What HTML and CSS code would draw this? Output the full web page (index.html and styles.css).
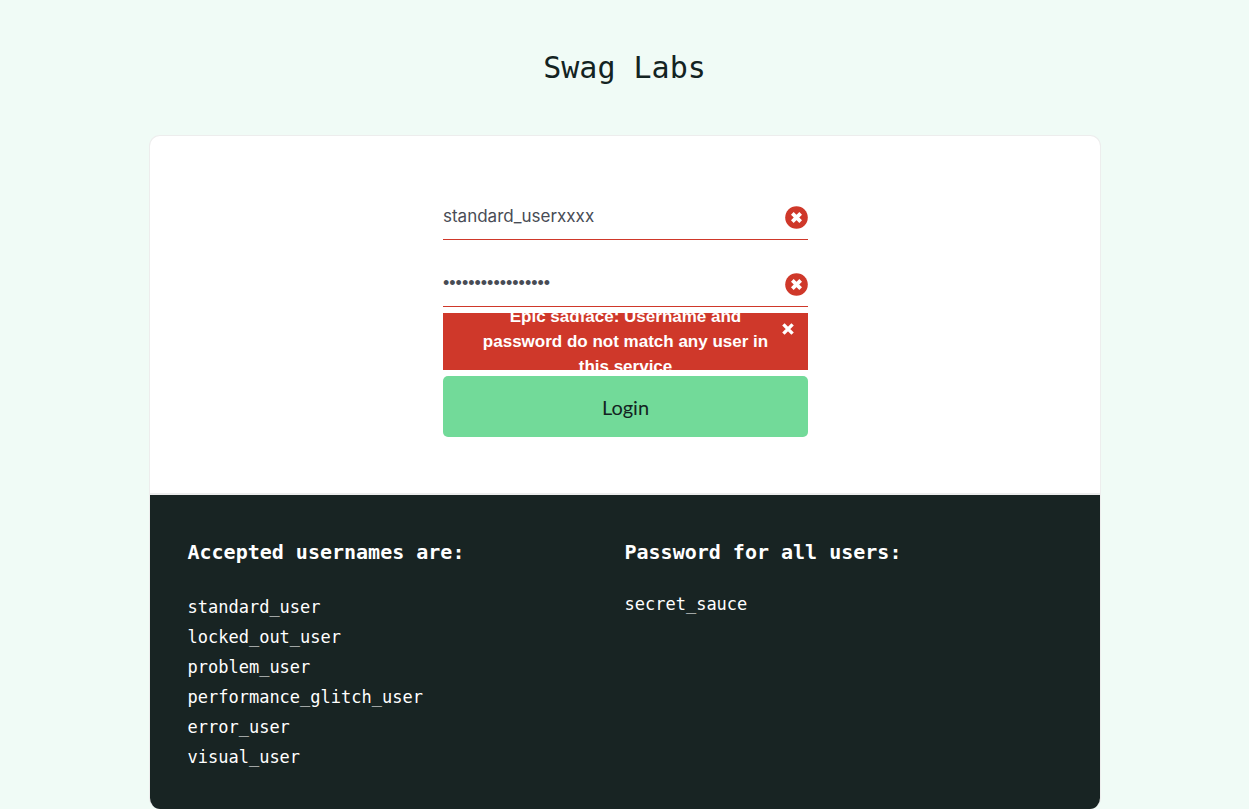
FILE: index.html
```html
<!DOCTYPE html>
<html lang="en">
<head>
<meta charset="utf-8">
<meta name="viewport" content="width=device-width, initial-scale=1">
<title>Swag Labs</title>
<link rel="stylesheet" href="styles.css">
</head>
<body>
<h1 class="logo">Swag Labs</h1>
<main class="card">
  <section class="login">
    <form class="form">
      <div class="field">
        <input class="input" type="text" aria-label="Username" value="standard_userxxxx">
        <svg class="field-icon" viewBox="0 0 22 22" aria-hidden="true"><circle cx="11" cy="11" r="10.8"/><path class="cross" d="M7 7l8 8M15 7l-8 8"/></svg>
      </div>
      <div class="field">
        <input class="input input-password" type="password" aria-label="Password" value="secret_saucexxxxx">
        <svg class="field-icon" viewBox="0 0 22 22" aria-hidden="true"><circle cx="11" cy="11" r="10.8"/><path class="cross" d="M7 7l8 8M15 7l-8 8"/></svg>
      </div>
      <div class="error" role="alert">
        <h3 class="error-text">Epic sadface: Username and password do not match any user in this service</h3>
        <button class="error-close" type="button" aria-label="Dismiss error"><svg viewBox="0 0 16 16" aria-hidden="true"><path d="M3.4 3.4l9.2 9.2M12.6 3.4l-9.2 9.2"/></svg></button>
      </div>
      <button class="submit" type="submit">Login</button>
    </form>
  </section>
  <section class="credentials">
    <div>
      <h4 class="heading">Accepted usernames are:</h4>
      <ul class="users">
        <li>standard_user</li>
        <li>locked_out_user</li>
        <li>problem_user</li>
        <li>performance_glitch_user</li>
        <li>error_user</li>
        <li>visual_user</li>
      </ul>
    </div>
    <div>
      <h4 class="heading">Password for all users:</h4>
      <p class="password">secret_sauce</p>
    </div>
  </section>
</main>
</body>
</html>
```
FILE: styles.css
```css
* { box-sizing: border-box; }
body {
  margin: 0;
  background: #f0fbf6;
  color: #132322;
  font-family: "DejaVu Sans Mono", "Liberation Mono", monospace;
}
h1, h3, h4, p, ul { margin: 0; padding: 0; }
.logo {
  padding: 48px 0 47px;
  font-size: 30px;
  font-weight: 400;
  line-height: 40px;
  text-align: center;
}
.card {
  max-width: 952px;
  margin: 0 auto;
  overflow: hidden;
  background: #fff;
  border: 1px solid #ededed;
  border-bottom: 0;
  border-radius: 11px;
}
.login {
  padding: 60px 20px 56px 22px;
  border-bottom: 2px solid #ededed;
}
.form {
  display: flex;
  flex-direction: column;
  max-width: 365px;
  margin: 0 auto;
}
.field {
  display: flex;
  align-items: center;
  height: 44px;
  margin-bottom: 23px;
  border-bottom: 1px solid #cf382a;
}
.field + .field { margin-bottom: 6px; }
.input {
  flex: 1;
  min-width: 0;
  padding: 0 0 4px;
  border: 0;
  outline: 0;
  background: none;
  color: #484c55;
  font-family: Inter, "Liberation Sans", sans-serif;
  font-size: 17px;
  line-height: 24px;
}
.input-password { font-family: "Liberation Sans", sans-serif; font-size: 18px; }
.field-icon { width: 23px; height: 23px; fill: #cf382a; }
.cross { fill: none; stroke: #fff; stroke-width: 3.6; }
.error {
  position: relative;
  display: flex;
  align-items: center;
  height: 57px;
  margin-bottom: 6px;
  padding: 0 32px;
  overflow: hidden;
  background: #cf382a;
  color: #fff;
}
.error-text {
  flex: 1;
  font: bold 17px/25px "Liberation Sans", sans-serif;
  text-align: center;
}
.error-close {
  position: absolute;
  top: 8px;
  right: 12px;
  width: 16px;
  height: 16px;
  padding: 0;
  border: 0;
  background: none;
}
.error-close svg { display: block; stroke: #fff; stroke-width: 3.4; }
.submit {
  height: 61px;
  padding: 0;
  border: 0;
  border-radius: 5px;
  background: #72da99;
  color: #132322;
  font: 20px/28px Lato, "Noto Sans", sans-serif;
}
.credentials {
  display: grid;
  grid-template-columns: 1fr 1fr;
  padding: 42px 38px 37px;
  background: #182423;
  color: #fff;
}
.heading { font-size: 20px; line-height: 30px; }
.users {
  padding-top: 25px;
  list-style: none;
  font-size: 17px;
  line-height: 30px;
}
.password { padding-top: 22px; font-size: 17px; line-height: 30px; }
```
